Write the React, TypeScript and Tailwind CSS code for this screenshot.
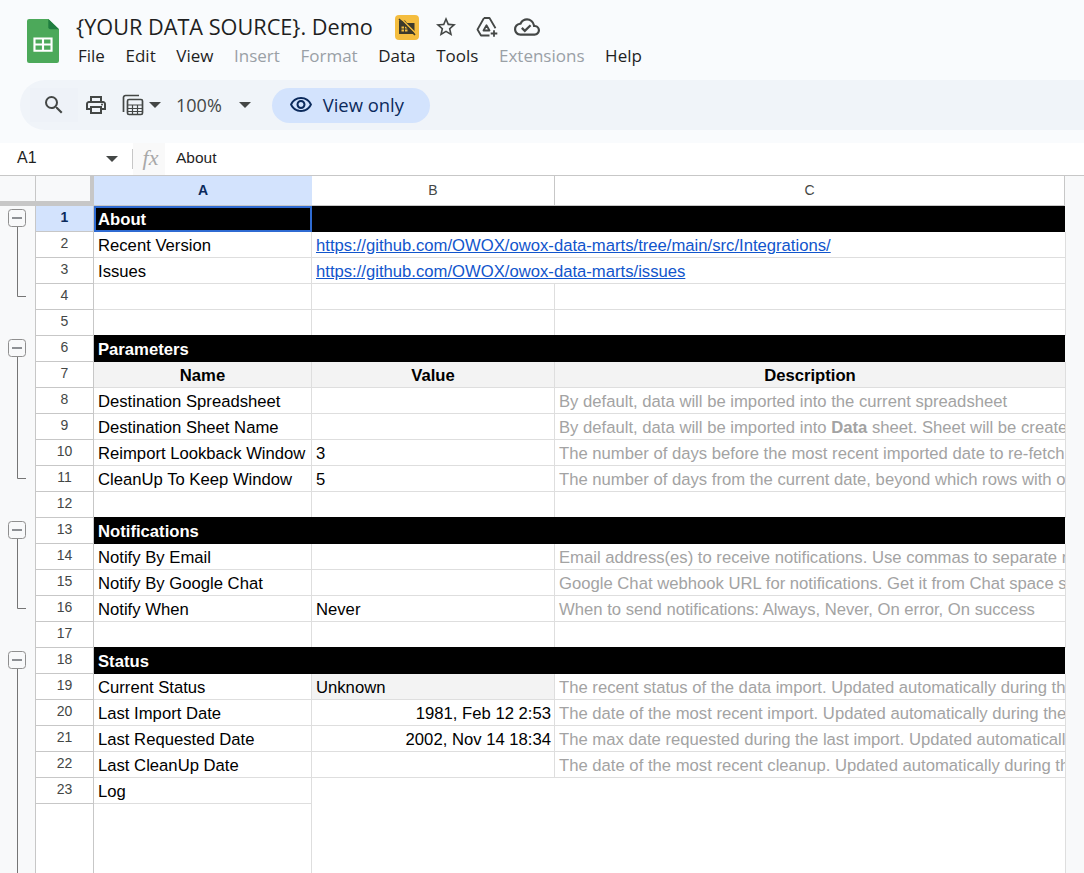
import {
  MdOutlineCloudDone,
  MdOutlineLocalPrintshop,
  MdOutlineVisibility,
  MdSearch,
  MdStarBorder,
} from "react-icons/md";

type GroupMark = "box" | "line" | "end" | "none";

type SheetRow = {
  n: number;
  group: GroupMark;
  kind?: "section" | "head";
  a?: string;
  b?: string;
  c?: React.ReactNode;
  link?: boolean;
  right?: boolean;
  shadeB?: boolean;
};

const rows: SheetRow[] = [
  { n: 1, group: "box", kind: "section", a: "About" },
  { n: 2, group: "line", a: "Recent Version", b: "https://github.com/OWOX/owox-data-marts/tree/main/src/Integrations/", link: true },
  { n: 3, group: "line", a: "Issues", b: "https://github.com/OWOX/owox-data-marts/issues", link: true },
  { n: 4, group: "end" },
  { n: 5, group: "none" },
  { n: 6, group: "box", kind: "section", a: "Parameters" },
  { n: 7, group: "line", kind: "head", a: "Name", b: "Value", c: "Description" },
  { n: 8, group: "line", a: "Destination Spreadsheet", c: "By default, data will be imported into the current spreadsheet" },
  {
    n: 9,
    group: "line",
    a: "Destination Sheet Name",
    c: (
      <>
        By default, data will be imported into <b>Data</b> sheet. Sheet will be created if it does not exist
      </>
    ),
  },
  { n: 10, group: "line", a: "Reimport Lookback Window", b: "3", c: "The number of days before the most recent imported date to re-fetch data" },
  { n: 11, group: "end", a: "CleanUp To Keep Window", b: "5", c: "The number of days from the current date, beyond which rows with older dates are removed" },
  { n: 12, group: "none" },
  { n: 13, group: "box", kind: "section", a: "Notifications" },
  { n: 14, group: "line", a: "Notify By Email", c: "Email address(es) to receive notifications. Use commas to separate multiple addresses" },
  { n: 15, group: "line", a: "Notify By Google Chat", c: "Google Chat webhook URL for notifications. Get it from Chat space settings" },
  { n: 16, group: "end", a: "Notify When", b: "Never", c: "When to send notifications: Always, Never, On error, On success" },
  { n: 17, group: "none" },
  { n: 18, group: "box", kind: "section", a: "Status" },
  { n: 19, group: "line", a: "Current Status", b: "Unknown", shadeB: true, c: "The recent status of the data import. Updated automatically during the import" },
  { n: 20, group: "line", a: "Last Import Date", b: "1981, Feb 12 2:53", right: true, c: "The date of the most recent import. Updated automatically during the import" },
  { n: 21, group: "line", a: "Last Requested Date", b: "2002, Nov 14 18:34", right: true, c: "The max date requested during the last import. Updated automatically during the import" },
  { n: 22, group: "line", a: "Last CleanUp Date", c: "The date of the most recent cleanup. Updated automatically during the cleanup" },
];

function Caret({ className }: { className: string }) {
  return (
    <svg className={className} width="12" height="6" viewBox="0 0 12 6">
      <path d="M0 0h12L6 6z" fill="#444746" />
    </svg>
  );
}

function SheetsLogo() {
  return (
    <svg width="32" height="44" viewBox="0 0 30 43" preserveAspectRatio="none">
      <path d="M2 0h18l10 10v31a2 2 0 0 1-2 2H2a2 2 0 0 1-2-2V2a2 2 0 0 1 2-2z" fill="#4ca95a" />
      <path d="M20 0l10 10h-8a2 2 0 0 1-2-2z" fill="#1f7d3f" />
      <path d="M6 18h18v14H6zM8 20v4h6v-4zm8 0v4h6v-4zM8 26v4h6v-4zm8 0v4h6v-4z" fill="#fff" fillRule="evenodd" />
    </svg>
  );
}

function GroupGutter({ mark }: { mark: GroupMark }) {
  return (
    <svg className="shrink-0" width="35" height="26" viewBox="0 0 35 26">
      {mark === "box" && (
        <>
          <path d="M17.5 20v6" stroke="#757575" />
          <rect x="8.5" y="3.5" width="17" height="17" rx="3" fill="#f8f9fa" stroke="#8f8f8f" />
          <path d="M12 12h10" stroke="#5f6368" strokeWidth="1.4" />
        </>
      )}
      {mark === "line" && <path d="M17.5 0v26" stroke="#757575" />}
      {mark === "end" && <path d="M17.5 0v12.5H26" stroke="#757575" fill="none" />}
    </svg>
  );
}

function RowHeader({ n }: { n: number }) {
  const active = n === 1;
  return (
    <div
      className={`flex h-full w-[58px] shrink-0 items-center justify-center border-r border-b border-[#c7c7c7] pb-[3px] text-[14px] ${
        active ? "bg-[#d3e3fd] font-bold text-[#0b2a5c]" : "text-[#444746]"
      }`}
    >
      {n}
    </div>
  );
}

function Row({ row }: { row: SheetRow }) {
  const isSection = row.kind === "section";
  const isHead = row.kind === "head";
  const isSelected = row.n === 1;

  return (
    <div className="flex h-[26px] shrink-0 bg-white">
      <div className="border-r border-[#c7c7c7] bg-[#f8f9fa]">
        <GroupGutter mark={row.group} />
      </div>
      <RowHeader n={row.n} />
      {isSection ? (
        <div className={`flex w-[971px] shrink-0 bg-black ${isSelected ? "h-[26px]" : "mt-[-1px] h-[27px] pt-[1px]"}`}>
          <div
            className={`flex w-[218px] items-center px-[4px] text-[16.67px] font-bold text-white ${
              isSelected ? "shadow-[inset_0_0_0_2px_#2f6bd2]" : ""
            }`}
          >
            {row.a}
          </div>
        </div>
      ) : (
        <>
          <div
            className={`flex w-[218px] shrink-0 items-center overflow-hidden whitespace-nowrap border-r border-b border-[#dedede] px-[4px] pt-[1px] text-[16.67px] text-black ${
              isHead ? "justify-center bg-[#f3f3f3] font-bold" : ""
            }`}
          >
            {row.a}
          </div>
          <div
            className={`flex w-[243px] shrink-0 items-center whitespace-nowrap border-b border-[#dedede] pt-[1px] text-[16.67px] text-black ${
              isHead ? "justify-center bg-[#f3f3f3] font-bold" : ""
            } ${row.link ? "" : "border-r"} ${row.right ? "justify-end pr-[3px]" : "px-[4px]"} ${row.shadeB ? "bg-[#f3f3f3]" : ""}`}
          >
            {row.link ? <span className="text-[#1155cc] underline">{row.b}</span> : row.b}
          </div>
          <div
            className={`flex w-[510px] shrink-0 items-center overflow-hidden whitespace-nowrap border-b border-[#dedede] px-[4px] pt-[1px] text-[16.67px] ${
              isHead ? "justify-center bg-[#f3f3f3] font-bold text-black" : "text-[#a3a3a3]"
            }`}
          >
            <span>{row.c}</span>
          </div>
        </>
      )}
      <div className={`flex-1 bg-[#f8f9fa] ${isSection ? "" : "border-l border-[#dedede]"}`} />
    </div>
  );
}

export default function App() {
  return (
    <div className="flex h-[873px] w-[1084px] flex-col overflow-hidden bg-[#f9fbfd] font-['Liberation_Sans',Arial,sans-serif]">
      <header className="flex h-[80px] shrink-0">
        <div className="ml-[27px] mt-[19px]">
          <SheetsLogo />
        </div>
        <div className="ml-[17px] flex flex-col">
          <div className="mt-[11px] flex h-[32px] items-center">
            <h1 className="whitespace-nowrap font-['Open_Sans',sans-serif] text-[21.7px] font-normal text-[#1f1f1f]">
              {"{YOUR DATA SOURCE}. Demo"}
            </h1>
            <div className="ml-[22px] flex h-[25px] w-[24px] items-center justify-center rounded-[4px] bg-[#f4bd3f]">
              <svg width="18" height="18" viewBox="0 0 18 18">
                <path d="M1 2.5h6l2 2.5h7.5v11H1z" fill="#3c3a2c" />
                <path d="M3.5 8.5h2.5v2H3.5zM7 8.5h2.5v2H7zM3.5 11.5h2.5v2H3.5zM7 11.5h2.5v2H7z" fill="#f4bd3f" />
                <path d="M2.5 0l16 16" stroke="#f4bd3f" strokeWidth="1.4" />
                <path d="M1 1l16 16" stroke="#3c3a2c" strokeWidth="1.6" />
              </svg>
            </div>
            <MdStarBorder className="ml-[15px] text-[24px] text-[#444746]" />
            <svg className="ml-[17px]" width="24" height="24" viewBox="0 0 24 24" fill="none" stroke="#444746" strokeWidth="1.8" strokeLinejoin="round">
              <path d="M14.5 15.5H8.5l3-5.2z" />
              <path d="M9 3h5.5L20.5 13.2M9 3L2.5 14.5 6 20.5h8.5" />
              <path d="M19 15.2v6.6M15.7 18.5h6.6" />
            </svg>
            <MdOutlineCloudDone className="ml-[15px] text-[26px] text-[#444746]" />
          </div>
          <nav className="flex gap-[20.6px] pl-[2px] font-['Open_Sans',sans-serif] text-[17px] text-[#1f1f1f]">
            <span>File</span>
            <span>Edit</span>
            <span>View</span>
            <span className="text-[#9aa0a6]">Insert</span>
            <span className="text-[#9aa0a6]">Format</span>
            <span>Data</span>
            <span>Tools</span>
            <span className="text-[#9aa0a6]">Extensions</span>
            <span>Help</span>
          </nav>
        </div>
      </header>

      <div className="ml-[20px] flex h-[50px] shrink-0 items-center rounded-l-[25px] bg-[#f0f4f9] pl-[10px]">
        <div className="flex h-[34px] w-[48px] items-center justify-center bg-[#eef2f8]">
          <MdSearch className="text-[24px] text-[#444746]" />
        </div>
        <MdOutlineLocalPrintshop className="ml-[6px] text-[24px] text-[#444746]" />
        <svg className="ml-[13px]" width="24" height="24" viewBox="0 0 24 24" fill="none" stroke="#444746" strokeWidth="1.7">
          <path d="M2.5 19V4.5a2 2 0 0 1 2-2H18" />
          <rect x="6.5" y="6.5" width="15" height="15" rx="1.5" />
          <path d="M6.5 12h15M6.5 15.5h15M6.5 18.5h15M11.5 12v9.5M16.5 12v9.5" strokeWidth="1.2" />
        </svg>
        <Caret className="ml-[4px]" />
        <span className="ml-[15px] font-['Open_Sans',sans-serif] text-[18px] text-[#444746]">100%</span>
        <Caret className="ml-[17px]" />
        <div className="ml-[21px] flex h-[35px] w-[158px] items-center rounded-full bg-[#d3e3fd] pl-[17px] font-['Open_Sans',sans-serif] text-[18.4px] font-medium text-[#0b2a5c]">
          <MdOutlineVisibility className="text-[24px]" />
          <span className="ml-[10px]">View only</span>
        </div>
      </div>

      <div className="h-[13px] shrink-0" />

      <div className="flex h-[33px] shrink-0 items-center border-b border-[#c7c7c7] bg-white">
        <span className="mb-[2px] ml-[17px] w-[89px] text-[16px] text-[#1f1f1f]">A1</span>
        <Caret className="mb-[1px]" />
        <div className="ml-[14px] h-[20px] w-px bg-[#c7c7c7]" />
        <div className="flex h-full w-[32px] items-center justify-center bg-[#f9f9f9] pb-[4px] pl-[3px] font-['Liberation_Serif',serif] text-[22px] italic text-[#a8a8a8]">
          fx
        </div>
        <span className="mb-[3px] ml-[11px] text-[15.5px] text-[#1f1f1f]">About</span>
      </div>

      <div className="flex h-[30px] shrink-0 bg-white">
        <div className="h-full w-[36px] border-b-[5px] border-r border-[#c7c7c7] bg-[#f8f9fa]" />
        <div className="h-full w-[58px] border-b-[5px] border-r-[4px] border-[#c7c7c7] bg-[#f8f9fa]" />
        <div className="flex w-[218px] items-center justify-center border-b border-[#c7c7c7] bg-[#d3e3fd] text-[14px] font-bold text-[#0b2a5c]">
          A
        </div>
        <div className="flex w-[243px] items-center justify-center border-r border-b border-[#c7c7c7] text-[14px] text-[#444746]">
          B
        </div>
        <div className="flex w-[510px] items-center justify-center border-r border-b border-[#c7c7c7] text-[14px] text-[#444746]">
          C
        </div>
        <div className="flex-1 bg-[#f8f9fa]" />
      </div>

      {rows.map((row) => (
        <Row key={row.n} row={row} />
      ))}

      <div className="flex min-h-0 flex-1 bg-white">
        <div className="flex flex-col">
          <div className="h-[26px] shrink-0 border-r border-[#c7c7c7] bg-[#f8f9fa]">
            <GroupGutter mark="line" />
          </div>
          <div className="flex flex-1 justify-center border-r border-[#c7c7c7] bg-[#f8f9fa]">
            <div className="w-px bg-[#757575]" />
          </div>
        </div>
        <div className="flex w-[276px] shrink-0 flex-col">
          <div className="flex h-[26px] shrink-0">
            <RowHeader n={23} />
            <div className="flex w-[218px] items-center border-r border-b border-[#dedede] px-[4px] pt-[1px] text-[16.67px] text-black">
              Log
            </div>
          </div>
          <div className="flex flex-1">
            <div className="w-[58px] border-r border-[#c7c7c7]" />
            <div className="w-[218px] border-r border-[#dedede]" />
          </div>
        </div>
        <div className="w-[753px] shrink-0" />
        <div className="flex-1 border-l border-[#dedede] bg-[#f8f9fa]" />
      </div>
    </div>
  );
}
